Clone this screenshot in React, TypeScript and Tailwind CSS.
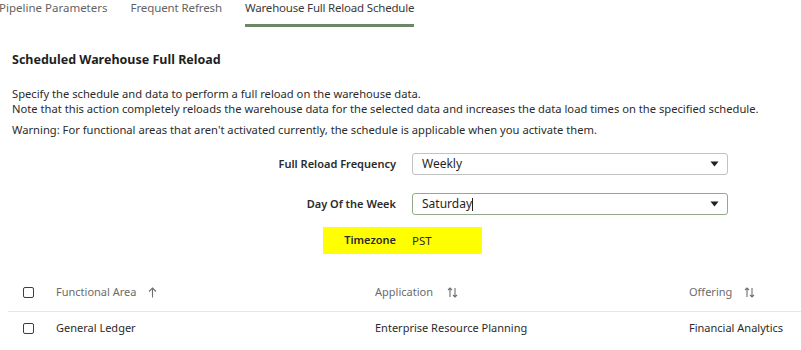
import React from "react";

const font = { fontFamily: '"Noto Sans", "Open Sans", Arial, sans-serif' };

const Caret = () => (
  <svg width="9" height="6" viewBox="0 0 9 6" className="shrink-0">
    <path d="M0.5 0.5h8L4.5 5.5z" fill="#1f1f1f" />
  </svg>
);

const Checkbox = () => (
  <span className="inline-block w-[11px] h-[11px] border-[1.5px] border-[#3d3d3d] rounded-[2px] bg-white" />
);

const SortUp = () => (
  <svg width="9" height="11" viewBox="0 0 9 11" className="shrink-0">
    <path d="M4.5 10.5V1M1 4.5l3.5-3.5 3.5 3.5" stroke="#6f6f6f" strokeWidth="1.1" fill="none" />
  </svg>
);

const SortBoth = () => (
  <svg width="11" height="11" viewBox="0 0 11 11" className="shrink-0">
    <path d="M3 10V1M1 3l2-2 2 2" stroke="#6f6f6f" strokeWidth="1.1" fill="none" />
    <path d="M8 1v9M6 8l2 2 2-2" stroke="#6f6f6f" strokeWidth="1.1" fill="none" />
  </svg>
);

const SelectBox = ({ value, focused }: { value: string; focused?: boolean }) => (
  <div
    className={`w-[316px] h-[22px] flex items-center justify-between pl-[9px] pr-[8px] rounded-[3px] border bg-white ${
      focused ? "border-[#94a88a]" : "border-[#c2c2c2]"
    }`}
  >
    <span className="text-[12px] text-[#1f1f1f]">
      {value}
      {focused && <span className="inline-block w-px h-[13px] bg-[#1f1f1f] align-middle" />}
    </span>
    <Caret />
  </div>
);

export default function App() {
  return (
    <div className="w-[801px] h-[350px] bg-white overflow-hidden text-[#2b2b2b]" style={font}>
      <div className="flex items-start h-[26px] ml-[-1px] text-[11.5px] leading-[15px] whitespace-nowrap">
        <span className="text-[#636363]">Pipeline Parameters</span>
        <span className="ml-[23px] text-[#636363] tracking-[-0.1px]">Frequent Refresh</span>
        <div className="ml-[23px] flex flex-col">
          <span className="text-[#3a3a3a] tracking-[-0.2px]">Warehouse Full Reload Schedule</span>
          <span className="mt-[9px] h-[3px] w-full bg-[#6c8763]" />
        </div>
      </div>

      <div className="pl-3">
        <h2 className="mt-[26px] text-[12.5px] leading-[16px] font-bold text-[#1f1f1f]">
          Scheduled Warehouse Full Reload
        </h2>
        <div className="mt-[18px] text-[11.2px] leading-[15px] text-[#2b2b2b]">
          <p>Specify the schedule and data to perform a full reload on the warehouse data.</p>
          <p>
            Note that this action completely reloads the warehouse data for the selected data and increases the data
            load times on the specified schedule.
          </p>
          <p className="mt-[6px]">
            Warning: For functional areas that aren't activated currently, the schedule is applicable when you
            activate them.
          </p>
        </div>
      </div>

      <div className="mt-[16px] flex flex-col gap-[18px]">
        <div className="flex items-center">
          <label className="w-[396px] text-right text-[11px] font-semibold text-[#2b2b2b]">
            Full Reload Frequency
          </label>
          <div className="ml-4">
            <SelectBox value="Weekly" />
          </div>
        </div>
        <div className="flex items-center">
          <label className="w-[396px] text-right text-[11px] font-semibold text-[#2b2b2b]">Day Of the Week</label>
          <div className="ml-4">
            <SelectBox value="Saturday" focused />
          </div>
        </div>
      </div>

      <div className="mt-[12px] ml-[323px] w-[159px] h-[27px] bg-[#ffff00] flex items-center">
        <span className="w-[73px] text-right text-[11px] font-semibold text-[#2b2b2b]">Timezone</span>
        <span className="ml-4 text-[11.5px] text-[#2b2b2b]">PST</span>
      </div>

      <div className="mt-[27px] ml-2">
        <div className="flex items-center h-[22px] text-[11px] text-[#6b6b6b]">
          <div className="w-[48px] pl-[15px] flex items-center">
            <Checkbox />
          </div>
          <div className="w-[319px] flex items-center gap-[12px]">
            <span>Functional Area</span>
            <SortUp />
          </div>
          <div className="w-[314px] flex items-center gap-[14px]">
            <span>Application</span>
            <SortBoth />
          </div>
          <div className="flex items-center gap-[12px]">
            <span>Offering</span>
            <SortBoth />
          </div>
        </div>
        <div className="mt-[8px] h-px bg-[#e6e6e6]" />
        <div className="flex items-center h-[33px] text-[11px] text-[#2b2b2b]">
          <div className="w-[48px] pl-[15px] flex items-center">
            <Checkbox />
          </div>
          <div className="w-[319px]">General Ledger</div>
          <div className="w-[314px]">Enterprise Resource Planning</div>
          <div className="whitespace-nowrap">Financial Analytics</div>
        </div>
      </div>
    </div>
  );
}
